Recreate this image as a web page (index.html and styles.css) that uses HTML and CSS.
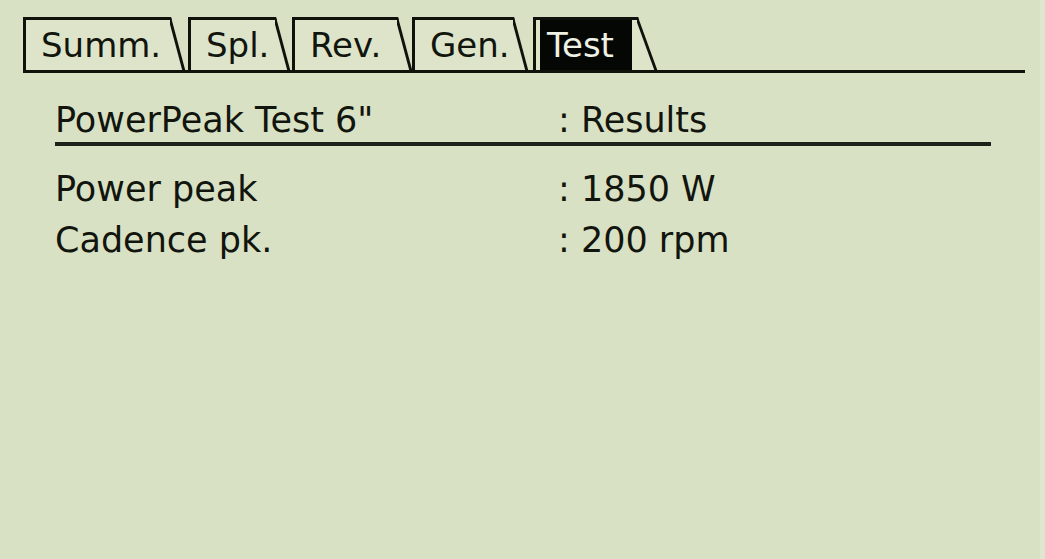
FILE: index.html
```html
<!DOCTYPE html>
<html lang="en">
<head>
<meta charset="utf-8">
<title>PowerPeak Test</title>
<link rel="stylesheet" href="styles.css">
</head>
<body>
<div class="screen">
  <div class="tabbar">
    <div class="tab t-summ"><span class="label">Summ.</span></div>
    <div class="tab t-spl"><span class="label">Spl.</span></div>
    <div class="tab t-rev"><span class="label">Rev.</span></div>
    <div class="tab t-gen"><span class="label">Gen.</span></div>
    <div class="tab t-test active"><span class="label">Test</span></div>
  </div>
  <div class="content">
    <div class="row head"><span class="key">PowerPeak Test 6"</span><span class="val">: Results</span></div>
    <div class="rows">
      <div class="row"><span class="key">Power peak</span><span class="val">: 1850 W</span></div>
      <div class="row"><span class="key">Cadence pk.</span><span class="val">: 200 rpm</span></div>
    </div>
  </div>
</div>
</body>
</html>
```

FILE: styles.css
```css
html {
  margin: 0;
  padding: 0;
  background: #d9e1c4;
}

body {
  margin: 0;
  padding: 0;
  font-family: "DejaVu Sans", "Liberation Sans", sans-serif;
  color: #11150d;
}

.screen {
  width: 1045px;
  height: 559px;
  box-sizing: border-box;
  padding-top: 17px;
  border-right: 5px solid #e0e6ce;
  overflow: hidden;
}

.tabbar {
  display: flex;
  align-items: flex-end;
  margin-left: 23px;
  width: 1002px;
  height: 56px;
  box-sizing: border-box;
  border-bottom: 3px solid #0e120b;
}

.tab {
  position: relative;
  box-sizing: border-box;
  height: 53px;
  border-top: 3px solid #0e120b;
  border-left: 3px solid #0e120b;
  background: #dde4c9;
  padding-left: 15px;
  display: flex;
  align-items: center;
  font-size: 34px;
  white-space: nowrap;
}

.tab::after {
  content: "";
  position: absolute;
  top: -3px;
  right: -1px;
  width: 22px;
  height: 53px;
  box-sizing: border-box;
  border-top: 3px solid #0e120b;
  border-right: 3px solid #0e120b;
  background: #dde4c9;
  transform-origin: top right;
  transform: skewX(15deg);
  z-index: -1;
}

.t-summ { width: 147px; margin-right: 18px; }
.t-spl  { width: 87px;  margin-right: 17px; }
.t-rev  { width: 105px; margin-right: 15px; }
.t-gen  { width: 101px; margin-right: 20px; }
.t-test { width: 104px; }

.tab.active {
  padding-left: 4px;
  align-items: stretch;
}

.tab.active::after {
  transform: skewX(20deg);
}

.tab.active .label {
  display: flex;
  align-items: center;
  box-sizing: border-box;
  width: 92px;
  padding-left: 7px;
  background: #050705;
  color: #eef1e4;
}

.content {
  margin: 27px 0 0 55px;
  width: 936px;
}

.row {
  display: grid;
  grid-template-columns: 503px 1fr;
  font-size: 35px;
  line-height: 51px;
  white-space: nowrap;
}

.head {
  line-height: 40px;
  padding-bottom: 2px;
  border-bottom: 4px solid #1c2119;
}

.rows {
  margin-top: 18px;
}
```
